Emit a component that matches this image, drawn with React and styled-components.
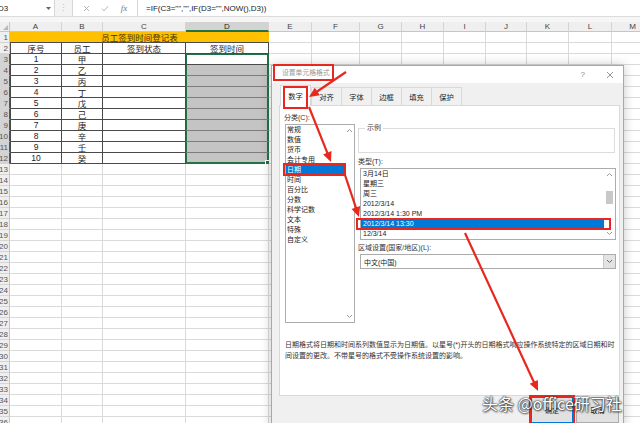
import React from "react"
import styled, { createGlobalStyle, css } from "styled-components"

const RED = "#e8271f"
const GREEN = "#217346"
const FONT = `"Liberation Sans", "Noto Sans CJK SC", sans-serif`

const COLS = [
  ["A", 52], ["B", 41], ["C", 83], ["D", 83], ["E", 43], ["F", 48], ["G", 42],
  ["H", 42], ["I", 42], ["J", 41], ["K", 42], ["L", 43], ["M", 42],
]
const ROW_COUNT = 36
const STEMS = ["甲", "乙", "丙", "丁", "戊", "己", "庚", "辛", "壬", "癸"]
const HEADERS = ["序号", "员工", "签到状态", "签到时间"]
const TABS = ["数字", "对齐", "字体", "边框", "填充", "保护"]
const CATEGORIES = ["常规", "数值", "货币", "会计专用", "日期", "时间", "百分比", "分数", "科学记数", "文本", "特殊", "自定义"]
const TYPES = ["3月14日", "星期三", "周三", "2012/3/14", "2012/3/14 1:30 PM", "2012/3/14 13:30", "12/3/14"]

// red annotation arrows: [fromX, fromY, tipX, tipY]
const ARROWS = [
  [346, 72, 309, 97],
  [309, 107, 331, 162],
  [345, 175, 359, 217],
  [465, 233, 538, 391],
]

const GlobalStyle = createGlobalStyle`
  * { box-sizing: border-box; }
  html, body { margin: 0; padding: 0; overflow: hidden; background: #fff; }
  body { font-family: ${FONT}; }
`

const marked = (t, r, b, l) => css`
  position: relative;
  &::after {
    content: "";
    position: absolute;
    top: ${t}px;
    right: ${r}px;
    bottom: ${b}px;
    left: ${l}px;
    border: 2px solid ${RED};
    pointer-events: none;
  }
`

const Screen = styled.div`
  position: relative;
  width: 640px;
  height: 423px;
  overflow: hidden;
  display: flex;
  flex-direction: column;
`

/* ---------- formula bar ---------- */

const FormulaBar = styled.div`
  height: 17px;
  display: flex;
  flex-shrink: 0;
  background: #f3f3f3;
  border-bottom: 1px solid #dcdcdc;
`

const NameBox = styled.div`
  width: 55px;
  background: #fff;
  border-right: 1px solid #d6d6d6;
  display: flex;
  align-items: center;
  justify-content: space-between;
  padding-right: 3px;
  font-size: 8px;
  color: #222;
  span { margin-left: -2px; }
`

const Grip = styled.div`
  width: 17px;
  display: flex;
  align-items: center;
  justify-content: center;
  color: #c0c0c0;
  font-size: 9px;
`

const FxBox = styled.div`
  width: 65px;
  background: #fff;
  border-left: 1px solid #d6d6d6;
  display: flex;
  align-items: center;
  justify-content: space-around;
  padding: 0 4px;
  color: #a8a8a8;
`

const FxText = styled.span`
  font-family: "Liberation Serif", serif;
  font-style: italic;
  font-size: 9px;
  color: #777;
`

const Formula = styled.div`
  flex: 1;
  background: #fff;
  border-left: 1px solid #d6d6d6;
  display: flex;
  align-items: center;
  padding-left: 8px;
  font-size: 8px;
  color: #222;
  white-space: nowrap;
`

const Strip = styled.div`
  height: 5px;
  flex-shrink: 0;
  background: #f6f6f6;
`

/* ---------- sheet ---------- */

const Sheet = styled.div`
  flex: 1;
  overflow: hidden;
  display: grid;
  grid-template-columns: 10px ${COLS.map(c => `${c[1]}px`).join(" ")};
  grid-template-rows: 10px;
  grid-auto-rows: 11px;
  font-family: ${FONT};
`

const Corner = styled.div`
  position: relative;
  background: #efefef;
  border-right: 1px solid #c6c6c6;
  border-bottom: 1px solid #c6c6c6;
  &::after {
    content: "";
    position: absolute;
    right: 1px;
    bottom: 1px;
    border-left: 5px solid transparent;
    border-bottom: 5px solid #b8b8b8;
  }
`

const ColHead = styled.div`
  display: flex;
  align-items: center;
  justify-content: center;
  font-size: 8px;
  color: ${p => (p.$active ? "#1e1e1e" : "#444")};
  background: ${p => (p.$active ? "#d3d3d3" : "#efefef")};
  border-right: 1px solid #d4d4d4;
  border-bottom: ${p => (p.$active ? `2px solid ${GREEN}` : "1px solid #c6c6c6")};
`

const RowHead = styled.div`
  display: flex;
  align-items: center;
  justify-content: flex-end;
  overflow: hidden;
  padding-right: 1px;
  font-size: 8px;
  color: #555;
  background: ${p => (p.$active ? "#d3d3d3" : "#efefef")};
  border-bottom: 1px solid #d4d4d4;
  border-right: 1px solid ${p => (p.$active ? GREEN : "#c6c6c6")};
`

const selShadow = sel => {
  if (!sel) return "none"
  const sides = [`inset 1px 0 0 ${GREEN}`, `inset -1px 0 0 ${GREEN}`]
  if (sel === "top") sides.push(`inset 0 1px 0 ${GREEN}`)
  if (sel === "bottom") sides.push(`inset 0 -1px 0 ${GREEN}`)
  return sides.join(", ")
}

const Cell = styled.div`
  position: relative;
  display: flex;
  align-items: center;
  justify-content: center;
  overflow: hidden;
  white-space: nowrap;
  font-size: 8.5px;
  color: #222;
  background: ${p => (p.$shade ? "#c4c4c4" : "#fff")};
  border-right: 1px solid ${p => (p.$sel ? GREEN : p.$dark ? "#4a4a4a" : "#dadada")};
  border-bottom: 1px solid
    ${p => (p.$sel === "bottom" ? GREEN : p.$shade ? "#7c7c7c" : p.$dark ? "#4a4a4a" : "#dadada")};
  ${p => p.$edge && css`border-left: 1px solid #4a4a4a;`}
  box-shadow: ${p => selShadow(p.$sel)};
  ${p => p.$sel === "bottom" && css`
    overflow: visible;
    &::after {
      content: "";
      position: absolute;
      right: -3px;
      bottom: -3px;
      width: 4px;
      height: 4px;
      background: ${GREEN};
      border: 1px solid #fff;
    }
  `}
`

const TitleCell = styled.div`
  grid-column: span 4;
  display: flex;
  align-items: center;
  justify-content: center;
  background: #ffc000;
  color: #3e3200;
  font-size: 8.5px;
  border-bottom: 1px solid #4a4a4a;
`

/* ---------- dialog ---------- */

const Dialog = styled.div`
  position: absolute;
  left: 271px;
  top: 65px;
  width: 353px;
  height: 372px;
  z-index: 2;
  display: flex;
  flex-direction: column;
  background: #f0f0f0;
  border: 1px solid #a8a8a8;
  box-shadow: 0 0 10px rgba(0, 0, 0, 0.22);
  font-family: ${FONT};
  color: #333;
`

const TitleBar = styled.div`
  height: 17px;
  flex-shrink: 0;
  display: flex;
  align-items: flex-start;
  justify-content: space-between;
  background: #fff;
  padding: 0 9px 0 3px;
`

const Title = styled.div`
  height: 13px;
  line-height: 13px;
  padding: 0 2px 0 7px;
  font-size: 6.8px;
  color: #999;
  outline: 2px solid ${RED};
  margin-top: 0;
`

const TitleButtons = styled.div`
  display: flex;
  align-items: center;
  gap: 21px;
  height: 17px;
  color: #888;
  font-size: 8px;
`

const DialogBody = styled.div`
  flex: 1;
  display: flex;
  flex-direction: column;
  padding: 0 4px 0 7px;
`

const TabRow = styled.div`
  height: 22px;
  display: flex;
  align-items: flex-end;
  padding-left: 1px;
`

const Tab = styled.div`
  width: 31px;
  height: ${p => (p.$active ? 21 : 18)}px;
  display: flex;
  align-items: center;
  justify-content: center;
  font-size: 7.3px;
  color: #222;
  background: ${p => (p.$active ? "#fff" : "#f0f0f0")};
  border: 1px solid #d9d9d9;
  border-bottom: none;
  margin-right: ${p => (p.$active ? 0 : -1)}px;
  margin-bottom: ${p => (p.$active ? -1 : 0)}px;
  z-index: ${p => (p.$active ? 1 : 0)};
  ${p => p.$active && marked(0, 2, -3, 2)}
`

const Panel = styled.div`
  width: 341px;
  height: 291px;
  flex-shrink: 0;
  background: #fff;
  border: 1px solid #d9d9d9;
  padding: 8px 0 0 4px;
`

const PanelTop = styled.div`
  display: grid;
  grid-template-columns: 71px 258px;
  column-gap: 3px;
`

const Column = styled.div`
  display: flex;
  flex-direction: column;
`

const Label = styled.div`
  height: 8px;
  line-height: 8px;
  font-size: 7px;
  color: #333;
  margin-top: ${p => p.$gap || 0}px;
  white-space: nowrap;
`

const ListBox = styled.div`
  display: flex;
  width: ${p => p.$w}px;
  height: ${p => p.$h}px;
  margin-top: ${p => p.$top}px;
  margin-left: ${p => p.$left}px;
  background: #fff;
  border: 1px solid #acacac;
`

const Items = styled.div`
  flex: 1;
  display: flex;
  flex-direction: column;
`

const Item = styled.div`
  height: 10px;
  line-height: 10px;
  font-size: 7px;
  padding-left: ${p => p.$pad}px;
  white-space: nowrap;
  color: ${p => (p.$selected ? "#fff" : "#222")};
  background: ${p => (p.$selected ? "#0078d7" : "transparent")};
  ${p => p.$selected && p.$mark}
`

const ScrollBar = styled.div`
  width: ${p => p.$w}px;
  display: flex;
  flex-direction: column;
  justify-content: space-between;
  align-items: center;
  padding: 3px 0;
  background: #fff;
`

const Thumb = styled.div`
  width: 7px;
  height: 13px;
  background: #c8c8c8;
  margin-top: -14px;
`

const Sample = styled.fieldset`
  margin: 10px 0 0 0;
  padding: 0 6px;
  min-width: 0;
  width: 257px;
  height: 29px;
  border: 1px solid #dcdcdc;
  legend {
    padding: 0 2px;
    font-size: 7px;
    line-height: 8px;
    color: #444;
  }
`

const Select = styled.div`
  display: flex;
  width: 256px;
  height: 15px;
  margin: 2px 0 0 2px;
  background: #fff;
  border: 1px solid #acacac;
`

const SelectValue = styled.div`
  flex: 1;
  display: flex;
  align-items: center;
  padding-left: 3px;
  font-size: 7px;
  color: #222;
`

const SelectArrow = styled.div`
  width: 12px;
  display: flex;
  align-items: center;
  justify-content: center;
  background: #e3e3e3;
  border-left: 1px solid #c8c8c8;
`

const Desc = styled.div`
  margin-top: 16px;
  padding-left: 1px;
  font-size: 7px;
  line-height: 11px;
  color: #333;
  white-space: nowrap;
`

const Footer = styled.div`
  display: flex;
  justify-content: flex-end;
  gap: 3px;
  padding-top: 1px;
`

const Button = styled.div`
  width: ${p => (p.$primary ? 42 : 43)}px;
  height: 26px;
  display: flex;
  align-items: center;
  justify-content: center;
  font-size: 7px;
  color: #222;
  background: #e1e1e1;
  border: 1px solid ${p => (p.$primary ? "#0078d7" : "#adadad")};
  ${p => p.$primary && css`outline: 2px solid ${RED};`}
`

/* ---------- overlays ---------- */

const Overlay = styled.svg`
  position: absolute;
  left: 0;
  top: 0;
  width: 640px;
  height: 423px;
  z-index: 3;
  pointer-events: none;
`

const Watermark = styled.div`
  position: absolute;
  left: 482px;
  top: 393px;
  z-index: 4;
  font-family: "Noto Sans CJK SC", "Liberation Sans", sans-serif;
  font-size: 16px;
  line-height: 20px;
  color: #fff;
  white-space: nowrap;
  text-shadow: 0 0 1px #222, 0 0 2px #222, 1px 1px 2px rgba(0, 0, 0, 0.6);
`

const Chevron = ({ down, color = "#9a9a9a" }) => (
  <svg width="7" height="5" viewBox="0 0 7 5">
    <polyline
      points={down ? "1,1 3.5,3.5 6,1" : "1,4 3.5,1.5 6,4"}
      fill="none"
      stroke={color}
      strokeWidth="1"
    />
  </svg>
)

const arrowHead = (x1, y1, x2, y2, len = 10, half = 4.5) => {
  const a = Math.atan2(y2 - y1, x2 - x1)
  const bx = x2 - Math.cos(a) * len
  const by = y2 - Math.sin(a) * len
  const nx = -Math.sin(a) * half
  const ny = Math.cos(a) * half
  return `${x2},${y2} ${bx + nx},${by + ny} ${bx - nx},${by - ny}`
}

const Arrows = () => (
  <Overlay viewBox="0 0 640 423">
    {ARROWS.map(([x1, y1, x2, y2], i) => {
      const a = Math.atan2(y2 - y1, x2 - x1)
      return (
        <g key={i}>
          <line
            x1={x1}
            y1={y1}
            x2={x2 - Math.cos(a) * 8}
            y2={y2 - Math.sin(a) * 8}
            stroke={RED}
            strokeWidth="2.2"
          />
          <polygon points={arrowHead(x1, y1, x2, y2)} fill={RED} />
        </g>
      )
    })}
  </Overlay>
)

const SheetRow = ({ r }) => {
  const inTable = r >= 2 && r <= 12
  return (
    <>
      <RowHead $active={r >= 3 && r <= 12}>{r}</RowHead>
      {r === 1 && <TitleCell>员工签到时间登记表</TitleCell>}
      {COLS.map(([key], ci) => {
        if (r === 1 && ci < 4) return null
        let text = ""
        if (r === 2 && ci < 4) text = HEADERS[ci]
        if (r >= 3 && r <= 12 && ci === 0) text = r - 2
        if (r >= 3 && r <= 12 && ci === 1) text = STEMS[r - 3]
        const sel = ci === 3 && r >= 3 && r <= 12 ? (r === 3 ? "top" : r === 12 ? "bottom" : "mid") : undefined
        return (
          <Cell
            key={key}
            $dark={inTable && ci < 4}
            $edge={inTable && ci === 0}
            $shade={ci === 3 && r >= 4 && r <= 12}
            $sel={sel}
          >
            {text}
          </Cell>
        )
      })}
    </>
  )
}

const FormatDialog = () => (
  <Dialog>
    <TitleBar>
      <Title>设置单元格格式</Title>
      <TitleButtons>
        <span>?</span>
        <svg width="8" height="8" viewBox="0 0 8 8">
          <path d="M1 1L7 7M7 1L1 7" stroke="#8a8a8a" strokeWidth="0.9" />
        </svg>
      </TitleButtons>
    </TitleBar>
    <DialogBody>
      <TabRow>
        {TABS.map((t, i) => (
          <Tab key={t} $active={i === 0}>{t}</Tab>
        ))}
      </TabRow>
      <Panel>
        <PanelTop>
          <Column>
            <Label>分类(C):</Label>
            <ListBox $w={70} $h={199} $top={2} $left={1}>
              <Items>
                {CATEGORIES.map((c, i) => (
                  <Item key={c} $pad={1} $selected={i === 4} $mark={marked(-2, -2, -1, -3)}>
                    {c}
                  </Item>
                ))}
              </Items>
              <ScrollBar $w={10}>
                <Chevron />
                <Chevron down />
              </ScrollBar>
            </ListBox>
          </Column>
          <Column>
            <Sample>
              <legend>示例</legend>
            </Sample>
            <Label $gap={5}>类型(T):</Label>
            <ListBox $w={256} $h={72} $top={2} $left={2}>
              <Items>
                {TYPES.map((t, i) => (
                  <Item key={t} $pad={2} $selected={i === 5} $mark={marked(-1, -7, -1, -5)}>
                    {t}
                  </Item>
                ))}
              </Items>
              <ScrollBar $w={11}>
                <Chevron />
                <Thumb />
                <Chevron down />
              </ScrollBar>
            </ListBox>
            <Label $gap={4}>区域设置(国家/地区)(L):</Label>
            <Select>
              <SelectValue>中文(中国)</SelectValue>
              <SelectArrow>
                <Chevron down color="#666" />
              </SelectArrow>
            </Select>
          </Column>
        </PanelTop>
        <Desc>
          日期格式将日期和时间系列数值显示为日期值。以星号(*)开头的日期格式响应操作系统特定的区域日期和时
          <br />
          间设置的更改。不带星号的格式不受操作系统设置的影响。
        </Desc>
      </Panel>
      <Footer>
        <Button $primary>确定</Button>
        <Button>取消</Button>
      </Footer>
    </DialogBody>
  </Dialog>
)

export default function App() {
  const rows = Array.from({ length: ROW_COUNT }, (_, i) => i + 1)
  return (
    <Screen>
      <GlobalStyle />
      <FormulaBar>
        <NameBox>
          <span>D3</span>
          <svg width="5" height="3" viewBox="0 0 5 3">
            <path d="M0 0H5L2.5 3Z" fill="#666" />
          </svg>
        </NameBox>
        <Grip>⋮</Grip>
        <FxBox>
          <svg width="7" height="7" viewBox="0 0 7 7">
            <path d="M1 1L6 6M6 1L1 6" stroke="#b4b4b4" strokeWidth="1" />
          </svg>
          <svg width="8" height="7" viewBox="0 0 8 7">
            <path d="M1 3.8L3 5.8L7 1.2" fill="none" stroke="#b4b4b4" strokeWidth="1" />
          </svg>
          <FxText>fx</FxText>
        </FxBox>
        <Formula>=IF(C3="","",IF(D3="",NOW(),D3))</Formula>
      </FormulaBar>
      <Strip />
      <Sheet>
        <Corner />
        {COLS.map(([key]) => (
          <ColHead key={key} $active={key === "D"}>{key}</ColHead>
        ))}
        {rows.map(r => (
          <SheetRow key={r} r={r} />
        ))}
      </Sheet>
      <FormatDialog />
      <Arrows />
      <Watermark>头条 @office研习社</Watermark>
    </Screen>
  )
}
